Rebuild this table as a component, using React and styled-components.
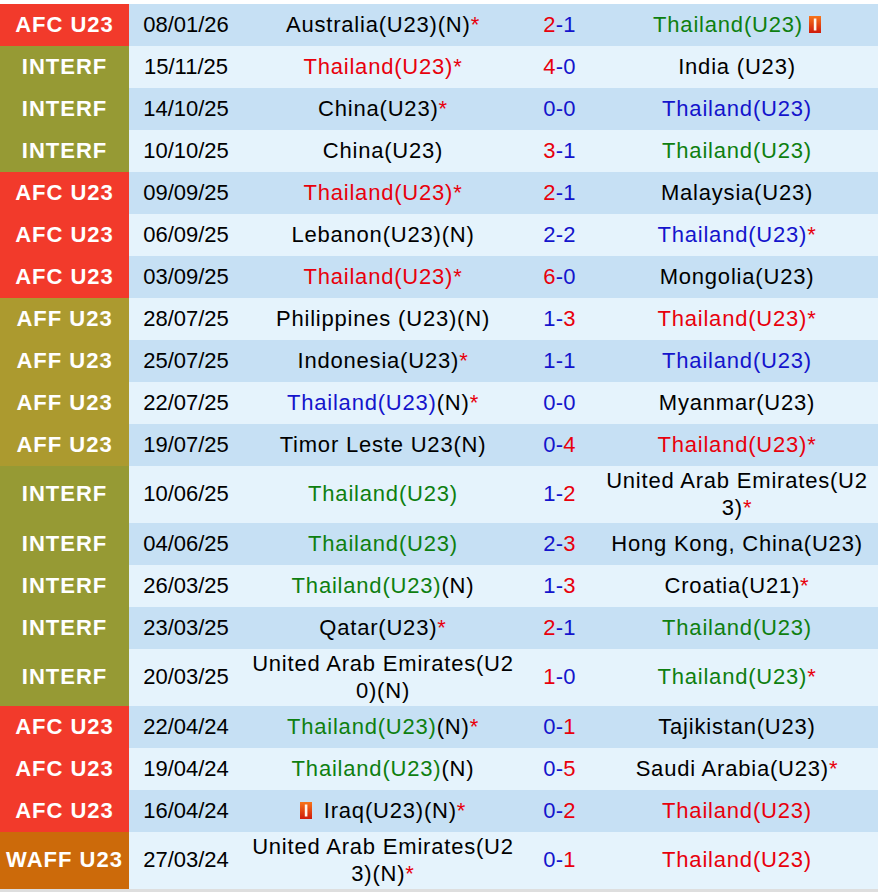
import styled, { createGlobalStyle } from "styled-components";

const GlobalStyle = createGlobalStyle`
  html, body {
    margin: 0;
    padding: 0;
    background: #ffffff;
  }
  body {
    font-family: "Liberation Sans", Arial, sans-serif;
  }
`;

const compColors = {
  "AFC U23": "#f23a2b",
  "INTERF": "#969a34",
  "AFF U23": "#ac9a2f",
  "WAFF U23": "#cc6a0a",
};

const nameColors = {
  win: "#e8000c",
  draw: "#1414cc",
  loss: "#0e7f10",
  none: "#000000",
};

const matches = [
  { comp: "AFC U23", date: "08/01/26", home: { name: "Australia(U23)(N)", star: true }, score: [2, 1], away: { name: "Thailand(U23)", res: "loss", cardAfter: true } },
  { comp: "INTERF", date: "15/11/25", home: { name: "Thailand(U23)", res: "win", star: true }, score: [4, 0], away: { name: "India (U23)" } },
  { comp: "INTERF", date: "14/10/25", home: { name: "China(U23)", star: true }, score: [0, 0], away: { name: "Thailand(U23)", res: "draw" } },
  { comp: "INTERF", date: "10/10/25", home: { name: "China(U23)" }, score: [3, 1], away: { name: "Thailand(U23)", res: "loss" } },
  { comp: "AFC U23", date: "09/09/25", home: { name: "Thailand(U23)", res: "win", star: true }, score: [2, 1], away: { name: "Malaysia(U23)" } },
  { comp: "AFC U23", date: "06/09/25", home: { name: "Lebanon(U23)(N)" }, score: [2, 2], away: { name: "Thailand(U23)", res: "draw", star: true } },
  { comp: "AFC U23", date: "03/09/25", home: { name: "Thailand(U23)", res: "win", star: true }, score: [6, 0], away: { name: "Mongolia(U23)" } },
  { comp: "AFF U23", date: "28/07/25", home: { name: "Philippines (U23)(N)" }, score: [1, 3], away: { name: "Thailand(U23)", res: "win", star: true } },
  { comp: "AFF U23", date: "25/07/25", home: { name: "Indonesia(U23)", star: true }, score: [1, 1], away: { name: "Thailand(U23)", res: "draw" } },
  { comp: "AFF U23", date: "22/07/25", home: { name: "Thailand(U23)", res: "draw", neutral: true, star: true }, score: [0, 0], away: { name: "Myanmar(U23)" } },
  { comp: "AFF U23", date: "19/07/25", home: { name: "Timor Leste U23(N)" }, score: [0, 4], away: { name: "Thailand(U23)", res: "win", star: true } },
  { comp: "INTERF", date: "10/06/25", home: { name: "Thailand(U23)", res: "loss" }, score: [1, 2], away: { name: "United Arab Emirates(U23)", star: true } },
  { comp: "INTERF", date: "04/06/25", home: { name: "Thailand(U23)", res: "loss" }, score: [2, 3], away: { name: "Hong Kong, China(U23)" } },
  { comp: "INTERF", date: "26/03/25", home: { name: "Thailand(U23)", res: "loss", neutral: true }, score: [1, 3], away: { name: "Croatia(U21)", star: true } },
  { comp: "INTERF", date: "23/03/25", home: { name: "Qatar(U23)", star: true }, score: [2, 1], away: { name: "Thailand(U23)", res: "loss" } },
  { comp: "INTERF", date: "20/03/25", home: { name: "United Arab Emirates(U20)(N)" }, score: [1, 0], away: { name: "Thailand(U23)", res: "loss", star: true } },
  { comp: "AFC U23", date: "22/04/24", home: { name: "Thailand(U23)", res: "loss", neutral: true, star: true }, score: [0, 1], away: { name: "Tajikistan(U23)" } },
  { comp: "AFC U23", date: "19/04/24", home: { name: "Thailand(U23)", res: "loss", neutral: true }, score: [0, 5], away: { name: "Saudi Arabia(U23)", star: true } },
  { comp: "AFC U23", date: "16/04/24", home: { name: "Iraq(U23)(N)", star: true, cardBefore: true }, score: [0, 2], away: { name: "Thailand(U23)", res: "win" } },
  { comp: "WAFF U23", date: "27/03/24", home: { name: "United Arab Emirates(U23)(N)", star: true }, score: [0, 1], away: { name: "Thailand(U23)", res: "win" } },
];

function RedCard({ gap, side }) {
  return (
    <CardIcon $gap={gap} $side={side} width="12" height="17" viewBox="0 0 12 17">
      <defs>
        <linearGradient id="rc" x1="0" y1="0" x2="0" y2="1">
          <stop offset="0" stopColor="#f7751a" />
          <stop offset="1" stopColor="#cf1a0c" />
        </linearGradient>
      </defs>
      <rect x="0" y="0" width="12" height="17" fill="url(#rc)" />
      <rect x="4.8" y="2.5" width="2.6" height="12" fill="#fff6ee" />
    </CardIcon>
  );
}

function Team({ team }) {
  return (
    <TeamCell>
      {team.cardBefore && <RedCard gap={12} side="right" />}
      <TeamName $color={nameColors[team.res || "none"]}>{team.name}</TeamName>
      {team.neutral && "(N)"}
      {team.star && <Star>*</Star>}
      {team.cardAfter && <RedCard gap={6} side="left" />}
    </TeamCell>
  );
}

function Score({ score }) {
  const [h, a] = score;
  return (
    <ScoreCell>
      <Goal $win={h > a}>{h}</Goal>-<Goal $win={a > h}>{a}</Goal>
    </ScoreCell>
  );
}

export default function App() {
  return (
    <>
      <GlobalStyle />
      <Page>
        <Table>
          {matches.map((m, i) => (
            <Row key={i} $dark={i % 2 === 0}>
              <CompCell $bg={compColors[m.comp]}>{m.comp}</CompCell>
              <DateCell>{m.date}</DateCell>
              <Team team={m.home} />
              <Score score={m.score} />
              <Team team={m.away} />
            </Row>
          ))}
        </Table>
      </Page>
    </>
  );
}

const Page = styled.div`
  padding-top: 4px;
  width: 878px;
`;

const Table = styled.div`
  display: flex;
  flex-direction: column;
  border-bottom: 3px solid #dedede;
`;

const Row = styled.div`
  display: grid;
  grid-template-columns: 129px 114px 280px 73px 1fr;
  min-height: 42px;
  background: ${(p) => (p.$dark ? "#c6e0f4" : "#e5f3fc")};
  font-size: 22px;
  line-height: 26.5px;
  color: #000;
`;

const Cell = styled.div`
  display: flex;
  align-items: center;
  justify-content: center;
  text-align: center;
  padding: 2px 5px;
`;

const CompCell = styled(Cell)`
  background: ${(p) => p.$bg};
  color: #ffffff;
  font-weight: bold;
  letter-spacing: 1px;
  padding: 2px 0;
  white-space: nowrap;
`;

const DateCell = styled(Cell)`
  padding: 2px 0;
`;

const TeamCell = styled.div`
  padding: 2px 5px;
  align-self: center;
  text-align: center;
  letter-spacing: 0.8px;
  word-break: break-all;
`;

const TeamName = styled.span`
  color: ${(p) => p.$color};
`;

const Star = styled.span`
  color: #e8000c;
`;

const ScoreCell = styled(Cell)`
  color: #1414cc;
  letter-spacing: 0.3px;
  padding: 2px 0;
`;

const Goal = styled.span`
  color: ${(p) => (p.$win ? "#e8000c" : "#1414cc")};
`;

const CardIcon = styled.svg`
  display: inline-block;
  vertical-align: -1px;
  margin-${(p) => p.$side}: ${(p) => p.$gap}px;
`;
